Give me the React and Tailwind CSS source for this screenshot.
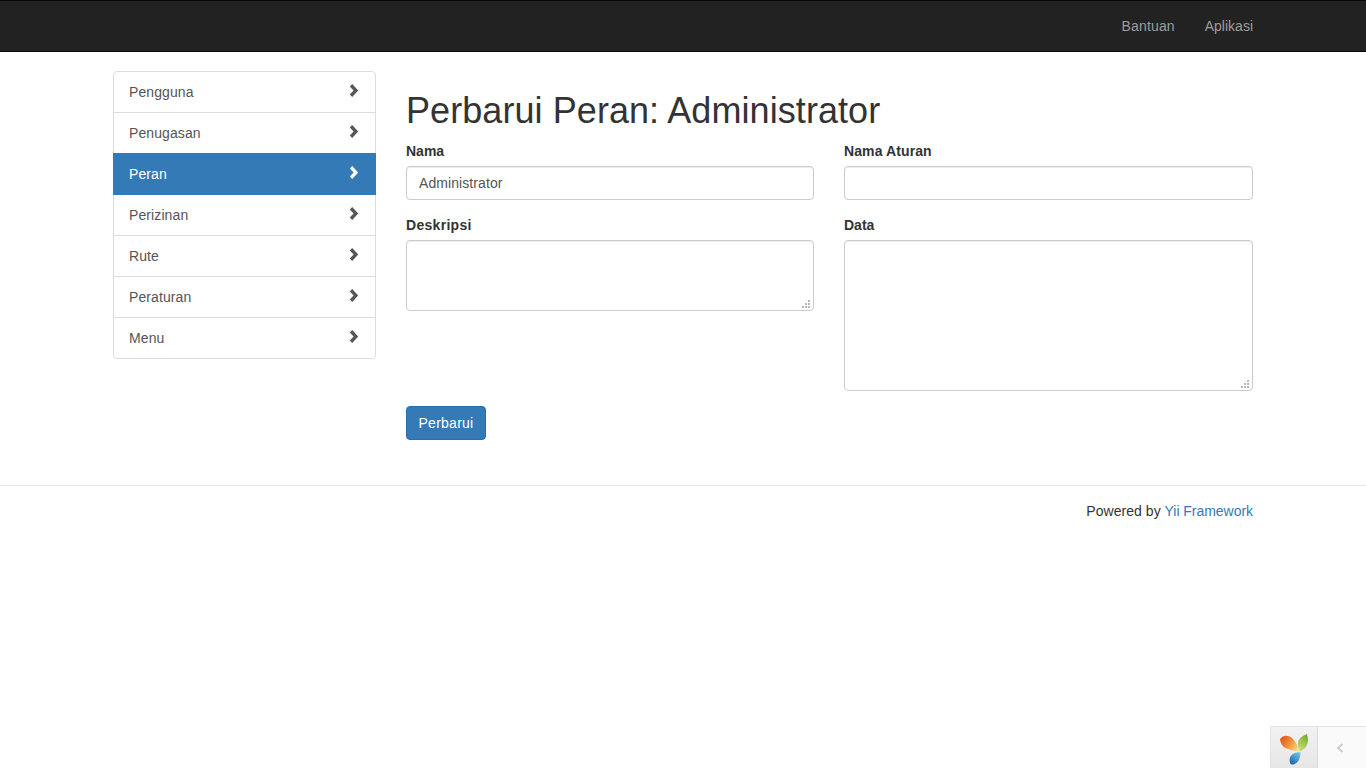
import React from "react";

const menuItems = ["Pengguna", "Penugasan", "Peran", "Perizinan", "Rute", "Peraturan", "Menu"];

function Chevron({ className }) {
  return (
    <svg width="11" height="14" viewBox="0 0 11 14" className={className}>
      <path d="M4.2 0 L10.2 6.5 L4.2 13 L1.8 10.6 L5.6 6.5 L1.8 2.4 Z" fill="currentColor" />
    </svg>
  );
}

function YiiLogo({ className }) {
  return (
    <svg width="30" height="32" viewBox="0 0 30 32" className={className}>
      <defs>
        <linearGradient id="orange" x1="0" y1="0.2" x2="1" y2="0.8">
          <stop offset="0" stopColor="#e4521c" />
          <stop offset="0.55" stopColor="#f2993f" />
          <stop offset="1" stopColor="#f9e38c" />
        </linearGradient>
        <linearGradient id="green" x1="0.7" y1="0" x2="0.3" y2="1">
          <stop offset="0" stopColor="#76ad2a" />
          <stop offset="1" stopColor="#cfe07a" />
        </linearGradient>
        <linearGradient id="blue" x1="0.8" y1="0" x2="0.2" y2="1">
          <stop offset="0" stopColor="#7cc6e6" />
          <stop offset="1" stopColor="#1364b0" />
        </linearGradient>
      </defs>
      <path d="M1 5 C4 0.8 9 0.6 13 4 C16.5 7.2 19 12.5 20.3 17.7 C15.5 17 10 15.8 6 13.8 C3 12.2 1.4 9 1 5 Z" fill="url(#orange)" />
      <path d="M27.7 0 C29.6 4 29.6 9 27 12.8 C25.4 15 23.2 16.6 21 17.7 C19 14.6 18 11 19 8 C20 4.4 24 1.6 27.7 0 Z" fill="url(#green)" />
      <path d="M21.5 18 C21.6 22.4 20.4 26.6 17.4 29 C15.6 30.4 13.4 31 11.5 30 C9.8 25.4 10.8 22 14 20 C16.2 18.6 19 18.2 21.5 18 Z" fill="url(#blue)" />
    </svg>
  );
}

function TextArea({ height }) {
  return (
    <div className="relative">
      <textarea
        className={`block w-full resize-none rounded border border-[#ccc] bg-white px-3 py-[6px] text-[#555] shadow-[inset_0_1px_1px_rgba(0,0,0,0.075)] ${height}`}
      />
      <svg width="8" height="8" viewBox="0 0 8 8" className="absolute right-[4px] bottom-[3px]">
        <path d="M6 0h2v2H6zM3 3h2v2H3zM6 3h2v2H6zM0 6h2v2H0zM3 6h2v2H3zM6 6h2v2H6z" fill="#b8b8b8" />
      </svg>
    </div>
  );
}

export default function App() {
  return (
    <div className="min-h-[768px] bg-white font-['Liberation_Sans',Arial,sans-serif] text-sm leading-5 text-[#333]">
      <nav className="h-[52px] border-y border-[#080808] bg-[#222]">
        <div className="mx-auto flex w-[1170px] justify-end px-[15px] text-[#9d9d9d]">
          <a className="p-[15px] tracking-[0.14px]">Bantuan</a>
          <a className="py-[15px] pl-[15px]">Aplikasi</a>
        </div>
      </nav>

      <div className="mx-auto flex w-[1170px] px-[15px] pt-[19px]">
        <aside className="w-[262.5px] shrink-0">
          <div className="flex flex-col">
            {menuItems.map((item) => (
              <a
                key={item}
                className={`-mt-px flex h-[42px] items-start justify-between border px-[15px] py-[10px] tracking-[0.1px] first:mt-0 first:rounded-t last:rounded-b ${
                  item === "Peran"
                    ? "relative z-10 border-[#337ab7] bg-[#337ab7] text-white"
                    : "border-[#ddd] bg-white text-[#555]"
                }`}
              >
                <span>{item}</span>
                <Chevron className="mt-[2px] mr-[1px]" />
              </a>
            ))}
          </div>
        </aside>

        <main className="ml-[30.5px] min-w-0 flex-1">
          <h1 className="mt-5 mb-[10px] text-[36px] leading-[39.6px] font-medium tracking-[0.07px]">
            Perbarui Peran: Administrator
          </h1>
          <form>
            <div className="grid grid-cols-[408px_409px] gap-x-[30px]">
              <div>
                <div className="mb-[15px]">
                  <label className="mb-[5px] block font-bold">Nama</label>
                  <input
                    defaultValue="Administrator"
                    className="block h-[34px] w-full rounded border border-[#ccc] bg-white px-3 py-[6px] tracking-[0.08px] text-[#555] shadow-[inset_0_1px_1px_rgba(0,0,0,0.075)]"
                  />
                </div>
                <div className="mb-[15px]">
                  <label className="mb-[5px] block font-bold tracking-[0.3px]">Deskripsi</label>
                  <TextArea height="h-[71px]" />
                </div>
              </div>
              <div>
                <div className="mb-[15px]">
                  <label className="mb-[5px] block font-bold tracking-[0.1px]">Nama Aturan</label>
                  <input className="block h-[34px] w-full rounded border border-[#ccc] bg-white px-3 py-[6px] text-[#555] shadow-[inset_0_1px_1px_rgba(0,0,0,0.075)]" />
                </div>
                <div className="mb-[15px]">
                  <label className="mb-[5px] block font-bold">Data</label>
                  <TextArea height="h-[151px]" />
                </div>
              </div>
            </div>
            <button
              type="button"
              className="h-[34px] w-[80px] rounded border border-[#2e6da4] bg-[#337ab7] py-[6px] tracking-[0.25px] text-white"
            >
              Perbarui
            </button>
          </form>
        </main>
      </div>

      <footer className="mt-[45px] border-t border-[#e5e5e5] pt-[15px]">
        <div className="mx-auto w-[1170px] px-[15px] text-right">
          <span className="tracking-[0.04px]">Powered by</span>{" "}
          <a className="tracking-[-0.04px] text-[#337ab7]">Yii Framework</a>
        </div>
      </footer>

      <div className="fixed right-0 bottom-0 flex h-[42px] w-[96px] border-t border-l border-[#e4e4e4] bg-[#fafafa]">
        <div className="flex w-[47px] items-center justify-center border-r border-[#d8d8d8] bg-gradient-to-b from-[#f2f2f2] to-[#e6e6e6]">
          <YiiLogo className="mt-[5px]" />
        </div>
        <div className="flex flex-1 items-center justify-center">
          <svg width="10" height="12" viewBox="0 0 10 12" fill="none" className="mr-[4px]">
            <path d="M7.5 2 L3 6 L7.5 10" stroke="#ccc" strokeWidth="1.8" />
          </svg>
        </div>
      </div>
    </div>
  );
}
